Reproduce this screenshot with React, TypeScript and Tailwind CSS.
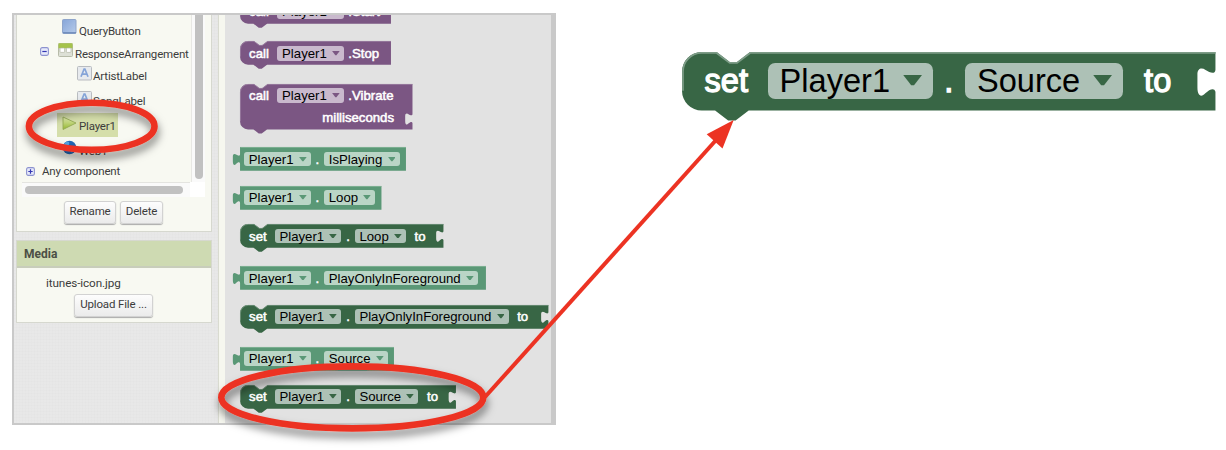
import type { ReactNode } from "react";

type Tone = "purple" | "mint" | "forest";

const blockFill: Record<Tone, string> = { purple: "#7b5683", mint: "#5a9876", forest: "#386645" };
const blockEdge: Record<Tone, string> = { purple: "#a38aa9", mint: "#8fbba1", forest: "#7d9c87" };
const fieldTone: Record<Tone, string> = {
  purple: "bg-[#c9b9cd]",
  mint: "bg-[#bad5c6]",
  forest: "bg-[#adc1b6]",
};

// Block sizes are drawn on a 13.2-unit em, so the font size scales the whole block.
const EM = 13.2;

function statementPath(w: number, h: number, socketY: number | null) {
  const socket =
    socketY === null
      ? ""
      : `V${socketY} c-0.2,1.8 -2.2,1.2 -4,0 c-1.6,-1.1 -3.3,-0.7 -3.3,1.8 v5.2 c0,3.6 1.6,4.2 3.2,2.4 c1.8,-1.6 3.6,-2.4 4.1,-0.6`;
  return `M0,8 A8,8 0 0 1 8,0 H14 l5.3,4 h3 l5.3,-4 H${w} ${socket} V${h} H27 l-5.3,4 h-3 l-5.3,-4 H8 a8,8 0 0 1 -8,-8 Z`;
}

function valuePath(w: number, h: number) {
  return `M7,0 H${w} V${h} H7 V16.4 c-0.5,-1.8 -2.3,-1 -4,0.6 c-1.6,1.8 -3.2,1.2 -3.2,-2.4 v-5.2 c0,-2.5 1.7,-2.9 3.3,-1.8 c1.8,1.2 3.8,1.8 3.9,0 Z`;
}

function Block({
  tone,
  w,
  h = 23.7,
  kind = "set",
  socketY = null,
  className = "",
  children,
}: {
  tone: Tone;
  w: number;
  h?: number;
  kind?: "set" | "get";
  socketY?: number | null;
  className?: string;
  children: ReactNode;
}) {
  const d = kind === "get" ? valuePath(w, h) : statementPath(w, h, socketY);
  return (
    <div className={`grid w-max shrink-0 ${className}`}>
      <svg
        className="block overflow-visible [grid-area:1/1]"
        width={`${w / EM}em`}
        height={`${h / EM}em`}
        viewBox={`0 0 ${w} ${h}`}
      >
        <path d={d} fill={blockFill[tone]} />
        <path
          d={kind === "get" ? `M7.3,0.4 H${w}` : `M0.4,${h - 8} V8 A7.6,7.6 0 0 1 8,0.4 H14 l5.3,4 h3 l5.3,-4 H${w}`}
          fill="none"
          stroke={blockEdge[tone]}
          strokeWidth="0.7"
        />
      </svg>
      <div
        className={`flex flex-col leading-none whitespace-nowrap [grid-area:1/1] ${kind === "get" ? "pl-[0.83em]" : "pl-[0.69em]"}`}
      >
        {children}
      </div>
    </div>
  );
}

function Row({ children }: { children: ReactNode }) {
  return <div className="flex h-[1.79em] items-center">{children}</div>;
}

function Word({ children, className = "" }: { children: ReactNode; className?: string }) {
  return <span className={`text-white [-webkit-text-stroke:0.04em_white] ${className}`}>{children}</span>;
}

function Field({ tone, children }: { tone: Tone; children: ReactNode }) {
  return (
    <span className={`flex h-[1.11em] items-center rounded-[0.22em] pr-[0.32em] pl-[0.37em] text-black ${fieldTone[tone]}`}>
      {children}
      <svg className="ml-[0.4em] h-[0.36em] w-[0.59em]" viewBox="0 0 8 5">
        <path d="M0,0 H8 L4.6,4.4 H3.4 Z" fill={blockFill[tone]} />
      </svg>
    </span>
  );
}

function Dot() {
  return <Word className="w-[0.99em] text-center">.</Word>;
}

function Call({ method }: { method: string }) {
  return (
    <Row>
      <Word className="mr-[0.63em]">call</Word>
      <Field tone="purple">Player1</Field>
      <Word className="ml-[0.32em]">{method}</Word>
    </Row>
  );
}

function Getter({ prop, w, className }: { prop: string; w: number; className: string }) {
  return (
    <Block tone="mint" kind="get" w={w} className={className}>
      <Row>
        <Field tone="mint">Player1</Field>
        <Dot />
        <Field tone="mint">{prop}</Field>
      </Row>
    </Block>
  );
}

function Setter({ prop, w, className = "" }: { prop: string; w: number; className?: string }) {
  return (
    <Block tone="forest" w={w} socketY={7.3} className={className}>
      <Row>
        <Word className="mr-[0.6em]">set</Word>
        <Field tone="forest">Player1</Field>
        <Dot />
        <Field tone="forest">{prop}</Field>
        <Word className="ml-[0.65em]">to</Word>
      </Row>
    </Block>
  );
}

function Toggle({ plus = false }: { plus?: boolean }) {
  return (
    <svg className="block size-[9px] shrink-0" viewBox="0 0 9 9">
      <rect x="0.6" y="0.6" width="7.8" height="7.8" rx="1.6" fill="#e6e9fa" stroke="#8d93cf" strokeWidth="1.1" />
      <path d={plus ? "M2.3,4.5 H6.7 M4.5,2.3 V6.7" : "M2.3,4.5 H6.7"} stroke="#3437b4" strokeWidth="1.2" />
    </svg>
  );
}

function LabelIcon() {
  return (
    <svg className="size-[15px] shrink-0" viewBox="0 0 15 15">
      <rect x="0.5" y="0.5" width="14" height="13.5" rx="1" fill="#e7eaee" stroke="#b9bcc0" />
      <path d="M4,10.8 L7.1,3 H7.9 L11,10.8 M5.2,8.2 H9.8" fill="none" stroke="#85a4d8" strokeWidth="1.7" />
    </svg>
  );
}

function Tree() {
  return (
    <div className="-ml-px h-[167px] text-[11.5px] leading-[14px] tracking-[-0.18px] whitespace-nowrap text-[#3c3c3c]">
      <div className="flex h-[23px] items-start pt-[4px] pl-[46px]">
        <svg className="size-[15px] shrink-0" viewBox="0 0 15 15">
          <defs>
            <linearGradient id="btn" x1="0" y1="0" x2="1" y2="1">
              <stop offset="0" stopColor="#86a5d8" />
              <stop offset="1" stopColor="#b6cbea" />
            </linearGradient>
          </defs>
          <rect x="0.5" y="0.5" width="13.5" height="14" rx="1" fill="url(#btn)" stroke="#8fa5cb" />
          <path d="M1,13.8 H14" stroke="#5f7cae" />
        </svg>
        <span className="mt-[5px] ml-[2px]">QueryButton</span>
      </div>
      <div className="flex h-[23px] items-start pt-[5px] pl-[24px]">
        <span className="mt-[4px]"><Toggle /></span>
        <svg className="ml-[9px] h-[14px] w-[15px] shrink-0" viewBox="0 0 15 14">
          <rect x="0.5" y="0.5" width="14" height="13" rx="1" fill="#dde0d6" stroke="#b7bba9" />
          <rect x="0.5" y="0.3" width="14" height="5" fill="#a5c34b" />
          <rect x="2" y="5" width="4.6" height="4.4" rx="0.8" fill="#fff" stroke="#b0b5a2" strokeWidth="0.7" />
          <rect x="8.4" y="5" width="4.6" height="4.4" rx="0.8" fill="#fff" stroke="#b0b5a2" strokeWidth="0.7" />
        </svg>
        <span className="mt-[4px] ml-[2px]">ResponseArrangement</span>
      </div>
      <div className="flex h-[24px] items-start pt-[5px] pl-[61px]">
        <LabelIcon />
        <span className="mt-[3px] ml-px">ArtistLabel</span>
      </div>
      <div className="flex h-[28px] items-start pt-[6px] pl-[61px]">
        <LabelIcon />
        <span className="mt-[3px] ml-px">SongLabel</span>
      </div>
      <div className="ml-[41px] flex h-[24px] w-[61px] items-start bg-[#d5deaa] pt-[3px] pl-[5px]">
        <svg className="h-[15px] w-[15px] shrink-0" viewBox="0 0 15 15">
          <defs>
            <linearGradient id="play" x1="0" y1="0" x2="0" y2="1">
              <stop offset="0" stopColor="#e4efb4" />
              <stop offset="1" stopColor="#93b52f" />
            </linearGradient>
          </defs>
          <path d="M1,1 L14,7 L1,13.5 Z" fill="url(#play)" stroke="#94a956" strokeWidth="0.9" />
        </svg>
        <span className="mt-[3px] ml-[2px]">Player1</span>
      </div>
      <div className="flex h-[24px] items-start pt-[3px] pl-[46px]">
        <svg className="size-[15px] shrink-0" viewBox="0 0 15 15">
          <circle cx="7.5" cy="7.5" r="6.8" fill="#2166b4" />
          <path d="M2,4 Q5,0.5 7,2 Q8,5 5,6 Q6,9 3.5,10 Q0,7 2,4 M9,7 Q13,5 13.5,9 Q11,13 9,12 Z" fill="#4fa5e4" />
        </svg>
        <span className="mt-[4px] ml-[2px]">Web1</span>
      </div>
      <div className="flex items-center pt-[3px] pl-[10px]">
        <Toggle plus />
        <span className="ml-[7px]">Any component</span>
      </div>
    </div>
  );
}

function PanelButton({ children, className }: { children: ReactNode; className: string }) {
  return (
    <button
      className={`h-[23px] rounded-[3px] border border-[#d2d2d2] bg-linear-to-b from-[#fdfdfd] to-[#ebebeb] pb-px text-[11.5px] leading-none tracking-[-0.15px] text-[#3c3c3c] shadow-[0_1px_1px_#aaa] ${className}`}
    >
      {children}
    </button>
  );
}

function Designer() {
  return (
    <div className="w-[204px] shrink-0 bg-[#e8e8e8] bg-[repeating-linear-gradient(0deg,#0000_0_2px,#00000002_2px_3px),repeating-linear-gradient(90deg,#0000_0_2px,#00000002_2px_3px)] pl-[2px] font-[Roboto,sans-serif]">
      <div className="h-[217px] w-[196px] border-x border-b border-[#d6d8cf] bg-[#f8f9f2]">
        <div className="flex">
          <div className="w-[174px] shrink-0">
            <Tree />
          </div>
          <div className="flex h-[167px] w-[14px] justify-center border-l border-[#e8e8e4] bg-[#fafafa]">
            <div className="h-[164px] w-[8px] rounded-b-full bg-[#c1c1c1]" />
          </div>
        </div>
        <div className="ml-[5px] flex w-[183px]">
          <div className="flex h-[15px] w-[168px] items-center border-t border-[#e4e4e0] bg-[#fafafa] pl-[3px]">
            <div className="h-[8px] w-[158px] rounded-full bg-[#c1c1c1]" />
          </div>
          <div className="h-[15px] w-[15px] bg-white" />
        </div>
        <div className="mt-[4px] flex gap-[4px] pl-[47px]">
          <PanelButton className="w-[52px]">Rename</PanelButton>
          <PanelButton className="w-[43px]">Delete</PanelButton>
        </div>
      </div>
      <div className="mt-[8px] h-[83px] w-[196px] border border-[#d6d8cf] bg-[#f8f9f2]">
        <div className="flex h-[27px] items-center border-b-2 border-[#c8cdbb] bg-[#cedab2] pl-[7px] text-[12px] font-bold text-[#4c4f45]">
          Media
        </div>
        <div className="mt-[8px] pl-[29px] text-[11.7px] leading-[14px] tracking-[-0.1px] text-[#3c3c3c]">
          itunes-icon.jpg
        </div>
        <PanelButton className="mt-[4px] ml-[57px] block w-[79px]">Upload File ...</PanelButton>
      </div>
    </div>
  );
}

function Flyout() {
  return (
    <div className="flex w-[326px] shrink-0 flex-col bg-[#e2e2e2] text-[13.2px]">
      <Block tone="purple" w={151} className="-mt-[15.3px] ml-[15px]">
        <Call method=".Start" />
      </Block>
      <Block tone="purple" w={151} className="mt-[18px] ml-[15px]">
        <Call method=".Stop" />
      </Block>
      <Block tone="purple" w={172.5} h={45.4} socketY={30.2} className="mt-[18.6px] ml-[15px]">
        <Call method=".Vibrate" />
        <div className="ml-[5.54em] flex h-[1.62em] items-center">
          <Word>milliseconds</Word>
        </div>
      </Block>
      <Getter prop="IsPlaying" w={173} className="mt-[18.3px] ml-[8px]" />
      <Getter prop="Loop" w={148.5} className="mt-[14.9px] ml-[8px]" />
      <Setter prop="Loop" w={203.5} className="mt-[14.7px] ml-[15px]" />
      <Getter prop="PlayOnlyInForeground" w={253} className="mt-[18.3px] ml-[8px]" />
      <Setter prop="PlayOnlyInForeground" w={308.5} className="mt-[14.6px] ml-[15px]" />
      <Getter prop="Source" w={161} className="mt-[18.4px] ml-[8px]" />
      <Setter prop="Source" w={216} className="mt-[14.5px] ml-[15px]" />
    </div>
  );
}

function Annotations() {
  return (
    <svg className="pointer-events-none absolute inset-0 h-[450px] w-[1226px]" viewBox="0 0 1226 450">
      <defs>
        <filter id="drop" x="-20%" y="-40%" width="140%" height="200%">
          <feDropShadow dx="1" dy="6" stdDeviation="4" floodColor="#000" floodOpacity="0.5" />
        </filter>
      </defs>
      <g fill="none" stroke="#ec3323" strokeWidth="6.6">
        <ellipse cx="91.7" cy="126.3" rx="62.8" ry="23.6" filter="url(#drop)" />
        <ellipse cx="352.3" cy="397.4" rx="131" ry="31" filter="url(#drop)" />
      </g>
      <path d="M485,397 L717,139" stroke="#ec3323" strokeWidth="4" />
      <path d="M733.7,120 L706.7,134.3 L722.5,148.5 Z" fill="#ec3323" />
    </svg>
  );
}

export default function App() {
  return (
    <div className="relative flex h-[450px] w-[1226px] items-start overflow-hidden bg-white font-['Liberation_Sans',Arial,sans-serif]">
      <div className="mt-[13px] ml-[12px] flex h-[412px] w-[544px] shrink-0 overflow-hidden border-2 border-[#c9c9c9]">
        <Designer />
        <div className="w-[7px] shrink-0 border-l border-[#d9dbd0] bg-[#f6f7ef]" />
        <Flyout />
        <div className="grow bg-[#c9c9c9]" />
      </div>
      <div className="mt-[52px] ml-[126px] shrink-0 text-[32.6px]">
        <Setter prop="Source" w={216} />
      </div>
      <Annotations />
    </div>
  );
}
